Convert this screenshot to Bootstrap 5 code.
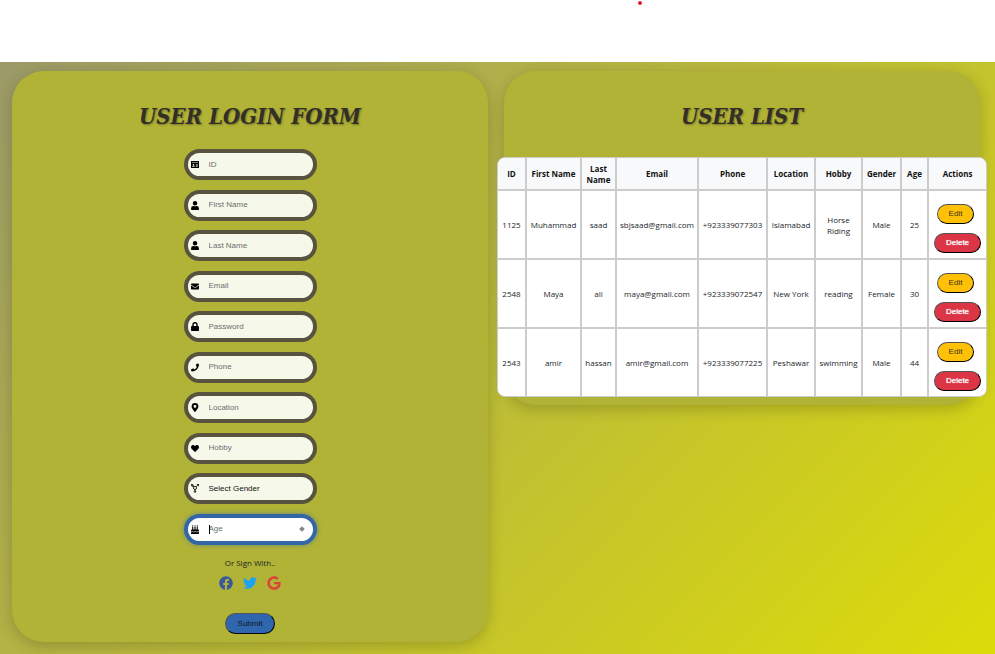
<!DOCTYPE html>
<html lang="en">
<head>
<meta charset="utf-8">
<meta name="viewport" content="width=device-width, initial-scale=1">
<title>User Login Form</title>
<link href="https://cdn.jsdelivr.net/npm/bootstrap@5.3.0/dist/css/bootstrap.min.css" rel="stylesheet">
<style>
body{font-family:"Open Sans","Noto Sans",sans-serif;font-size:8px;line-height:12px;color:#212529;background:#fff}
.top-strip{height:62px;padding:1px 0 0 64%}
.red-dot{width:4px;height:4px;margin-left:1px;background:#e01a2b}
.stage{min-height:calc(100vh - 62px);padding:9px 15px 12px 12px;gap:16px;background:linear-gradient(135deg,#9b9a68,#dcdc0a)}
.panel{flex:1 1 0;min-width:0;background:#b1b337;border-radius:32px;box-shadow:0 4px 15px rgba(0,0,0,.2);padding:24px 0 8px}
.panel h1{font-family:"DejaVu Serif Condensed","DejaVu Serif",serif;font-weight:700;font-style:italic;font-size:22px;line-height:42px;color:#332f28;text-shadow:1px 1px 2px rgba(0,0,0,.35)}
.fields{height:396px;width:133px;margin-top:12px}
.field{height:31px;border:4px solid #57533f;border-radius:16px;background:#f6f8ea;padding:0 3px}
.field svg{width:8px;height:9px;flex:none}
.field input,.field select{flex:1 1 0;min-width:0;width:0;border:0;outline:0;background:transparent;padding:0 0 0 10px;font:8px/12px "Liberation Sans",Arial,sans-serif;color:#111;appearance:none;-moz-appearance:textfield}
.field input::placeholder{color:#6c6f6c;opacity:1}
.field input::-webkit-inner-spin-button{display:none}
.field.active{background:#fff;border-color:#3266a6;box-shadow:0 0 5px rgba(50,102,166,.6)}
.caret{left:17px;top:7px;width:1px;height:9px;background:#000}
.stepper{width:4px;height:4px;background:#888;transform:rotate(45deg);margin-right:6px}
.or-text{margin-top:12px}
.social{gap:10px;margin-top:7px}
.social a{line-height:0}
.social svg{width:14px;height:14px}
.pill{font:8px/12px "Liberation Sans",Arial,sans-serif;border:1px outset #000;border-radius:12px;padding:0 9px;height:20px}
.pill-submit{background:#3066ae;color:#101820;height:21px;padding:0 12px;margin-top:23px}
.pill-edit{background:#ffc107;color:#3b3315;padding:0 11px}
.pill-delete{background:#dc3545;color:#fff;padding:0 11px;text-shadow:0 0 1px #fff}
.list-wrap{margin:20px -7px 0}
.users{table-layout:fixed;width:100%;border-collapse:separate;border-spacing:0;border:1px solid #ccc;border-radius:8px;background:#fff;overflow:hidden;text-align:center}
.users th,.users td{border:1px solid #ccc;padding:0;vertical-align:middle}
.users tr>:first-child{border-left:0}
.users tr>:last-child{border-right:0}
.users thead th{border-top:0;height:32px;background:#f8f9fa;font-weight:700;line-height:11px;color:#111}
.users tbody td{height:69px;line-height:11px}
.users tbody tr:last-child td{border-bottom:0;height:68px}
.actions{gap:9px;padding-top:8px}
.w-id{width:28px}.w-first{width:55px}.w-last{width:35px}.w-mail{width:82px}.w-phone{width:69px}.w-loc{width:48px}.w-hobby{width:47px}.w-gender{width:39px}.w-age{width:27px}.w-act{width:58px}
</style>
<script src="https://cdn.jsdelivr.net/npm/bootstrap@5.3.0/dist/js/bootstrap.bundle.min.js"></script>
</head>
<body>
<header class="top-strip"><div class="red-dot rounded-circle"></div></header>
<main class="stage d-flex align-items-start">
<form class="panel d-flex flex-column align-items-center">
  <h1 class="m-0">USER LOGIN FORM</h1>
  <div class="fields d-flex flex-column justify-content-between">
    <label class="field d-flex align-items-center"><svg viewBox="0 0 576 512"><path fill-rule="evenodd" d="M0 0h576v512H0zM60 120v30h456v-30zM176 215a52 52 0 1 0 .1 0zM80 420h192q0-72-60-72h-72q-60 0-60 72zM340 220v36h156v-36zM340 290v36h156v-36zM340 360v36h156v-36z"/></svg><input type="text" placeholder="ID" aria-label="ID"></label>
    <label class="field d-flex align-items-center"><svg viewBox="0 0 448 512"><path d="M224 256a128 128 0 1 0 0-256 128 128 0 1 0 0 256zm90 32h-17a174 174 0 0 1-146 0h-17A134 134 0 0 0 0 422v42a48 48 0 0 0 48 48h352a48 48 0 0 0 48-48v-42a134 134 0 0 0-134-134z"/></svg><input type="text" placeholder="First Name" aria-label="First Name"></label>
    <label class="field d-flex align-items-center"><svg viewBox="0 0 448 512"><path d="M224 256a128 128 0 1 0 0-256 128 128 0 1 0 0 256zm90 32h-17a174 174 0 0 1-146 0h-17A134 134 0 0 0 0 422v42a48 48 0 0 0 48 48h352a48 48 0 0 0 48-48v-42a134 134 0 0 0-134-134z"/></svg><input type="text" placeholder="Last Name" aria-label="Last Name"></label>
    <label class="field d-flex align-items-center"><svg viewBox="0 0 512 512"><path d="M502 191c4-3 10 0 10 5v204a48 48 0 0 1-48 48H48a48 48 0 0 1-48-48V196c0-5 6-8 10-5 22 17 52 40 155 114 21 15 57 48 91 48s71-33 91-48c103-74 133-97 155-114zM256 320c23 0 57-29 74-42 133-96 143-105 174-129a20 20 0 0 0 8-15v-22a48 48 0 0 0-48-48H48a48 48 0 0 0-48 48v22c0 6 3 11 8 15 31 24 41 33 174 129 17 13 51 42 74 42z"/></svg><input type="email" placeholder="Email" aria-label="Email"></label>
    <label class="field d-flex align-items-center"><svg viewBox="0 0 448 512"><path fill-rule="evenodd" d="M400 224h-24v-72a152 152 0 0 0-304 0v72H48a48 48 0 0 0-48 48v192a48 48 0 0 0 48 48h352a48 48 0 0 0 48-48V272a48 48 0 0 0-48-48zm-104 0H152v-72a72 72 0 0 1 144 0z"/></svg><input type="password" placeholder="Password" aria-label="Password"></label>
    <label class="field d-flex align-items-center"><svg viewBox="0 0 512 512"><path d="M493 25 389 1a24 24 0 0 0-27 14l-48 112a24 24 0 0 0 7 28l61 50a371 371 0 0 1-177 177l-50-61a24 24 0 0 0-28-7L15 362a24 24 0 0 0-14 27l24 104a24 24 0 0 0 23 19c256 0 464-207 464-464a24 24 0 0 0-19-23z"/></svg><input type="tel" placeholder="Phone" aria-label="Phone"></label>
    <label class="field d-flex align-items-center"><svg viewBox="0 0 384 512"><path fill-rule="evenodd" d="M172 502C27 291 0 270 0 192a192 192 0 0 1 384 0c0 78-27 99-172 310a24 24 0 0 1-40 0zM192 272a80 80 0 1 0 0-160 80 80 0 1 0 0 160z"/></svg><input type="text" placeholder="Location" aria-label="Location"></label>
    <label class="field d-flex align-items-center"><svg viewBox="0 0 512 512"><path d="M462 63c-55-47-136-38-187 13l-19 21-20-21C186 25 104 16 50 63c-63 53-66 149-10 207l193 200a31 31 0 0 0 45 0l194-200c56-58 53-154-10-207z"/></svg><input type="text" placeholder="Hobby" aria-label="Hobby"></label>
    <label class="field d-flex align-items-center"><svg viewBox="0 0 512 576"><g fill="none" stroke="#000" stroke-width="54"><circle cx="256" cy="250" r="100"/><path d="M256 350v226M176 464h160M186 178 40 30M326 178 472 30M27 140V27h110M375 27h110v113M76 184l100-98"/></g></svg><select aria-label="Select Gender"><option>Select Gender</option><option>Male</option><option>Female</option></select></label>
    <label class="field active d-flex align-items-center position-relative"><svg viewBox="0 0 448 512"><path d="M448 384c-28 0-31-32-75-32-43 0-46 32-74 32-29 0-31-32-75-32-43 0-46 32-75 32s-31-32-74-32c-44 0-47 32-75 32v-80a48 48 0 0 1 48-48h16V112h64v144h64V112h64v144h64V112h64v144h16a48 48 0 0 1 48 48zm0 128H0v-96c43 0 46-32 75-32 28 0 31 32 74 32 44 0 46-32 75-32 28 0 31 32 75 32 43 0 46-32 74-32 29 0 32 32 75 32zM96 96a32 32 0 0 1-32-34C64 38 96 32 96 0c12 0 32 30 32 56s-14 40-32 40zm128 0a32 32 0 0 1-32-34c0-24 32-30 32-62 12 0 32 30 32 56s-14 40-32 40zm128 0a32 32 0 0 1-32-34c0-24 32-30 32-62 12 0 32 30 32 56s-14 40-32 40z"/></svg><input type="number" placeholder="Age" aria-label="Age"><span class="caret position-absolute ms-1"></span><span class="stepper"></span></label>
  </div>
  <div class="or-text">Or Sign With..</div>
  <div class="social d-flex">
    <a href="#" aria-label="Facebook"><svg viewBox="0 0 512 512"><path fill="#3b5998" d="M504 256C504 119 393 8 256 8S8 119 8 256c0 124 91 226 209 245V328h-63v-72h63v-55c0-62 37-96 94-96 27 0 55 5 55 5v61h-31c-31 0-41 19-41 39v46h69l-11 72h-58v173c119-19 210-121 210-245z"/></svg></a>
    <a href="#" aria-label="Twitter"><svg viewBox="0 0 512 512"><path fill="#1da1f2" d="M459.370 151.716c.325 4.548.325 9.097.325 13.645 0 138.720-105.583 298.558-298.558 298.558-59.452 0-114.680-17.219-161.137-47.106 8.447.974 16.568 1.299 25.340 1.299 49.055 0 94.213-16.568 130.274-44.832-46.132-.975-84.792-31.188-98.112-72.772 6.498.974 12.995 1.624 19.818 1.624 9.421 0 18.843-1.300 27.614-3.573-48.081-9.747-84.143-51.980-84.143-102.985v-1.299c13.969 7.797 30.214 12.670 47.431 13.319-28.264-18.843-46.781-51.005-46.781-87.391 0-19.492 5.197-37.360 14.294-52.954 51.655 63.675 129.300 105.258 216.365 109.807-1.624-7.797-2.599-15.918-2.599-24.040 0-57.828 46.782-104.934 104.934-104.934 30.213 0 57.502 12.670 76.670 33.137 23.715-4.548 46.456-13.320 66.599-25.340-7.798 24.366-24.366 44.833-46.132 57.827 21.117-2.273 41.584-8.122 60.426-16.243-14.292 20.791-32.161 39.308-52.628 54.253z"/></svg></a>
    <a href="#" aria-label="Google"><svg viewBox="0 0 488 512"><path fill="#db4437" d="M488 261.800C488 403.300 391.100 504 248 504 110.800 504 0 393.200 0 256S110.800 8 248 8c66.800 0 123 24.500 166.300 64.900l-67.500 64.900C258.500 52.600 94.300 116.600 94.300 256c0 86.500 69.100 156.600 153.700 156.600 98.200 0 135-70.400 140.800-106.900H248v-85.300h236.100c2.300 12.700 3.900 24.900 3.900 41.400z"/></svg></a>
  </div>
  <button type="button" class="pill pill-submit">Submit</button>
</form>
<section class="panel">
  <h1 class="m-0 text-center">USER LIST</h1>
  <div class="list-wrap">
  <table class="users">
    <colgroup><col class="w-id"><col class="w-first"><col class="w-last"><col class="w-mail"><col class="w-phone"><col class="w-loc"><col class="w-hobby"><col class="w-gender"><col class="w-age"><col class="w-act"></colgroup>
    <thead><tr><th>ID</th><th>First Name</th><th>Last Name</th><th>Email</th><th>Phone</th><th>Location</th><th>Hobby</th><th>Gender</th><th>Age</th><th>Actions</th></tr></thead>
    <tbody>
      <tr><td>1125</td><td>Muhammad</td><td>saad</td><td>sbjsaad@gmail.com</td><td>+923339077303</td><td>Islamabad</td><td>Horse Riding</td><td>Male</td><td>25</td><td><div class="actions d-flex flex-column align-items-center"><button type="button" class="pill pill-edit me-1">Edit</button><button type="button" class="pill pill-delete">Delete</button></div></td></tr>
      <tr><td>2548</td><td>Maya</td><td>ali</td><td>maya@gmail.com</td><td>+923339072547</td><td>New York</td><td>reading</td><td>Female</td><td>30</td><td><div class="actions d-flex flex-column align-items-center"><button type="button" class="pill pill-edit me-1">Edit</button><button type="button" class="pill pill-delete">Delete</button></div></td></tr>
      <tr><td>2543</td><td>amir</td><td>hassan</td><td>amir@gmail.com</td><td>+923339077225</td><td>Peshawar</td><td>swimming</td><td>Male</td><td>44</td><td><div class="actions d-flex flex-column align-items-center"><button type="button" class="pill pill-edit me-1">Edit</button><button type="button" class="pill pill-delete">Delete</button></div></td></tr>
    </tbody>
  </table>
  </div>
</section>
</main>
</body>
</html>
